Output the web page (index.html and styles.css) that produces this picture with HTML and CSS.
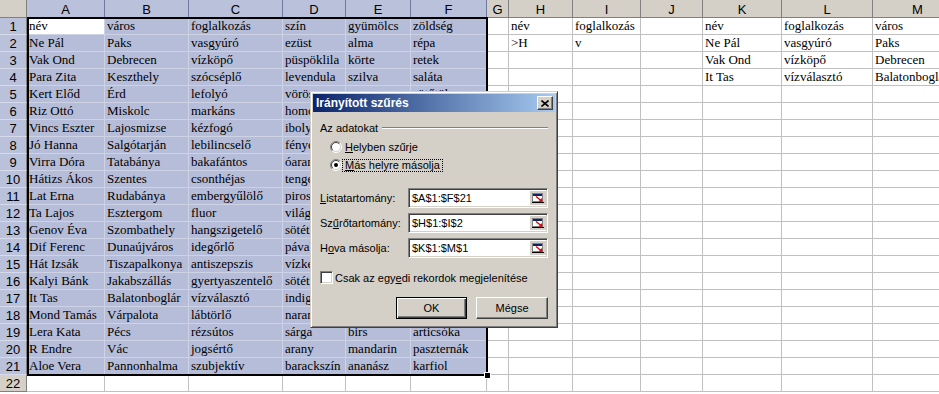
FILE: index.html
```html
<!DOCTYPE html>
<html lang="hu">
<head>
    <meta charset="UTF-8">
    <title>Irányított szűrés</title>
    <link rel="stylesheet" href="styles.css">
</head>
<body>
    <div class="sheet">
        <div class="row head-row">
            <div class="corner"></div>
            <div class="col-head picked">A</div><div class="col-head picked">B</div><div class="col-head picked">C</div>
            <div class="col-head picked">D</div><div class="col-head picked">E</div><div class="col-head picked">F</div>
            <div class="col-head">G</div><div class="col-head">H</div><div class="col-head">I</div>
            <div class="col-head">J</div><div class="col-head">K</div><div class="col-head">L</div><div class="col-head">M</div>
        </div>

        <div class="row in-range"><div class="row-head">1</div>
            <div class="cell active">név</div><div class="cell">város</div><div class="cell">foglalkozás</div><div class="cell">szín</div><div class="cell">gyümölcs</div><div class="cell">zöldség</div>
            <div class="cell"></div><div class="cell">név</div><div class="cell">foglalkozás</div><div class="cell"></div><div class="cell">név</div><div class="cell">foglalkozás</div><div class="cell">város</div></div>
        <div class="row in-range"><div class="row-head">2</div>
            <div class="cell">Ne Pál</div><div class="cell">Paks</div><div class="cell">vasgyúró</div><div class="cell">ezüst</div><div class="cell">alma</div><div class="cell">répa</div>
            <div class="cell"></div><div class="cell">&gt;H</div><div class="cell">v</div><div class="cell"></div><div class="cell">Ne Pál</div><div class="cell">vasgyúró</div><div class="cell">Paks</div></div>
        <div class="row in-range"><div class="row-head">3</div>
            <div class="cell">Vak Ond</div><div class="cell">Debrecen</div><div class="cell">vízköpő</div><div class="cell">püspöklila</div><div class="cell">körte</div><div class="cell">retek</div>
            <div class="cell"></div><div class="cell"></div><div class="cell"></div><div class="cell"></div><div class="cell">Vak Ond</div><div class="cell">vízköpő</div><div class="cell">Debrecen</div></div>
        <div class="row in-range"><div class="row-head">4</div>
            <div class="cell">Para Zita</div><div class="cell">Keszthely</div><div class="cell">szócséplő</div><div class="cell">levendula</div><div class="cell">szilva</div><div class="cell">saláta</div>
            <div class="cell"></div><div class="cell"></div><div class="cell"></div><div class="cell"></div><div class="cell">It Tas</div><div class="cell">vízválasztó</div><div class="cell">Balatonboglár</div></div>
        <div class="row in-range"><div class="row-head">5</div>
            <div class="cell">Kert Előd</div><div class="cell">Érd</div><div class="cell">lefolyó</div><div class="cell">vörös</div><div class="cell">meggy</div><div class="cell">sütőtök</div>
            <div class="cell"></div><div class="cell"></div><div class="cell"></div><div class="cell"></div><div class="cell"></div><div class="cell"></div><div class="cell"></div></div>
        <div class="row in-range"><div class="row-head">6</div>
            <div class="cell">Riz Ottó</div><div class="cell">Miskolc</div><div class="cell">markáns</div><div class="cell">homokszín</div><div class="cell">banán</div><div class="cell">hagyma</div>
            <div class="cell"></div><div class="cell"></div><div class="cell"></div><div class="cell"></div><div class="cell"></div><div class="cell"></div><div class="cell"></div></div>
        <div class="row in-range"><div class="row-head">7</div>
            <div class="cell">Vincs Eszter</div><div class="cell">Lajosmizse</div><div class="cell">kézfogó</div><div class="cell">ibolya</div><div class="cell">cseresznye</div><div class="cell">paprika</div>
            <div class="cell"></div><div class="cell"></div><div class="cell"></div><div class="cell"></div><div class="cell"></div><div class="cell"></div><div class="cell"></div></div>
        <div class="row in-range"><div class="row-head">8</div>
            <div class="cell">Jó Hanna</div><div class="cell">Salgótarján</div><div class="cell">lebilincselő</div><div class="cell">fényes</div><div class="cell">citrom</div><div class="cell">karalábé</div>
            <div class="cell"></div><div class="cell"></div><div class="cell"></div><div class="cell"></div><div class="cell"></div><div class="cell"></div><div class="cell"></div></div>
        <div class="row in-range"><div class="row-head">9</div>
            <div class="cell">Virra Dóra</div><div class="cell">Tatabánya</div><div class="cell">bakafántos</div><div class="cell">óarany</div><div class="cell">dinnye</div><div class="cell">uborka</div>
            <div class="cell"></div><div class="cell"></div><div class="cell"></div><div class="cell"></div><div class="cell"></div><div class="cell"></div><div class="cell"></div></div>
        <div class="row in-range"><div class="row-head">10</div>
            <div class="cell">Hátizs Ákos</div><div class="cell">Szentes</div><div class="cell">csonthéjas</div><div class="cell">tengerkék</div><div class="cell">eper</div><div class="cell">spenót</div>
            <div class="cell"></div><div class="cell"></div><div class="cell"></div><div class="cell"></div><div class="cell"></div><div class="cell"></div><div class="cell"></div></div>
        <div class="row in-range"><div class="row-head">11</div>
            <div class="cell">Lat Erna</div><div class="cell">Rudabánya</div><div class="cell">embergyűlölő</div><div class="cell">piros</div><div class="cell">füge</div><div class="cell">sóska</div>
            <div class="cell"></div><div class="cell"></div><div class="cell"></div><div class="cell"></div><div class="cell"></div><div class="cell"></div><div class="cell"></div></div>
        <div class="row in-range"><div class="row-head">12</div>
            <div class="cell">Ta Lajos</div><div class="cell">Esztergom</div><div class="cell">fluor</div><div class="cell">világoskék</div><div class="cell">kiwi</div><div class="cell">zeller</div>
            <div class="cell"></div><div class="cell"></div><div class="cell"></div><div class="cell"></div><div class="cell"></div><div class="cell"></div><div class="cell"></div></div>
        <div class="row in-range"><div class="row-head">13</div>
            <div class="cell">Genov Éva</div><div class="cell">Szombathely</div><div class="cell">hangszigetelő</div><div class="cell">sötétkék</div><div class="cell">málna</div><div class="cell">brokkoli</div>
            <div class="cell"></div><div class="cell"></div><div class="cell"></div><div class="cell"></div><div class="cell"></div><div class="cell"></div><div class="cell"></div></div>
        <div class="row in-range"><div class="row-head">14</div>
            <div class="cell">Dif Ferenc</div><div class="cell">Dunaújváros</div><div class="cell">idegőrlő</div><div class="cell">pávakék</div><div class="cell">szeder</div><div class="cell">padlizsán</div>
            <div class="cell"></div><div class="cell"></div><div class="cell"></div><div class="cell"></div><div class="cell"></div><div class="cell"></div><div class="cell"></div></div>
        <div class="row in-range"><div class="row-head">15</div>
            <div class="cell">Hát Izsák</div><div class="cell">Tiszapalkonya</div><div class="cell">antiszepszis</div><div class="cell">vízkék</div><div class="cell">ribizli</div><div class="cell">cukkini</div>
            <div class="cell"></div><div class="cell"></div><div class="cell"></div><div class="cell"></div><div class="cell"></div><div class="cell"></div><div class="cell"></div></div>
        <div class="row in-range"><div class="row-head">16</div>
            <div class="cell">Kalyi Bánk</div><div class="cell">Jakabszállás</div><div class="cell">gyertyaszentelő</div><div class="cell">sötétzöld</div><div class="cell">barack</div><div class="cell">tök</div>
            <div class="cell"></div><div class="cell"></div><div class="cell"></div><div class="cell"></div><div class="cell"></div><div class="cell"></div><div class="cell"></div></div>
        <div class="row in-range"><div class="row-head">17</div>
            <div class="cell">It Tas</div><div class="cell">Balatonboglár</div><div class="cell">vízválasztó</div><div class="cell">indigó</div><div class="cell">datolya</div><div class="cell">borsó</div>
            <div class="cell"></div><div class="cell"></div><div class="cell"></div><div class="cell"></div><div class="cell"></div><div class="cell"></div><div class="cell"></div></div>
        <div class="row in-range"><div class="row-head">18</div>
            <div class="cell">Mond Tamás</div><div class="cell">Várpalota</div><div class="cell">lábtörlő</div><div class="cell">narancs</div><div class="cell">egres</div><div class="cell">bab</div>
            <div class="cell"></div><div class="cell"></div><div class="cell"></div><div class="cell"></div><div class="cell"></div><div class="cell"></div><div class="cell"></div></div>
        <div class="row in-range"><div class="row-head">19</div>
            <div class="cell">Lera Kata</div><div class="cell">Pécs</div><div class="cell">rézsútos</div><div class="cell">sárga</div><div class="cell">birs</div><div class="cell">articsóka</div>
            <div class="cell"></div><div class="cell"></div><div class="cell"></div><div class="cell"></div><div class="cell"></div><div class="cell"></div><div class="cell"></div></div>
        <div class="row in-range"><div class="row-head">20</div>
            <div class="cell">R Endre</div><div class="cell">Vác</div><div class="cell">jogsértő</div><div class="cell">arany</div><div class="cell">mandarin</div><div class="cell">paszternák</div>
            <div class="cell"></div><div class="cell"></div><div class="cell"></div><div class="cell"></div><div class="cell"></div><div class="cell"></div><div class="cell"></div></div>
        <div class="row in-range"><div class="row-head">21</div>
            <div class="cell">Aloe Vera</div><div class="cell">Pannonhalma</div><div class="cell">szubjektív</div><div class="cell">barackszín</div><div class="cell">ananász</div><div class="cell">karfiol</div>
            <div class="cell"></div><div class="cell"></div><div class="cell"></div><div class="cell"></div><div class="cell"></div><div class="cell"></div><div class="cell"></div></div>
        <div class="row"><div class="row-head">22</div>
            <div class="cell"></div><div class="cell"></div><div class="cell"></div><div class="cell"></div><div class="cell"></div><div class="cell"></div>
            <div class="cell"></div><div class="cell"></div><div class="cell"></div><div class="cell"></div><div class="cell"></div><div class="cell"></div><div class="cell"></div></div>

        <!-- selected range A1:F21 -->
        <div class="range-frame"><span class="fill-handle"></span></div>

        <!-- Advanced filter dialog -->
        <div class="dialog">
            <div class="title-bar">
                <span>Irányított szűrés</span>
                <span class="close-btn">
                    <svg width="8" height="7" viewBox="0 0 8 7"><path d="M0.5 0.5L7.5 6.5M7.5 0.5L0.5 6.5" stroke="#000" stroke-width="1.6"/></svg>
                </span>
            </div>
            <div class="dialog-body">
                <div class="group-label"><span>Az adatokat</span><span class="etched"></span></div>

                <div class="radio-row first">
                    <svg class="radio" width="12" height="12" viewBox="0 0 12 12">
                        <circle cx="6" cy="6" r="5" fill="#fff"/>
                        <path d="M2.1 9.9A5.5 5.5 0 0 1 9.9 2.1" fill="none" stroke="#808080"/>
                        <path d="M9.9 2.1A5.5 5.5 0 0 1 2.1 9.9" fill="none" stroke="#fff"/>
                        <path d="M2.8 9.2A4.5 4.5 0 0 1 9.2 2.8" fill="none" stroke="#404040"/>
                        <path d="M9.2 2.8A4.5 4.5 0 0 1 2.8 9.2" fill="none" stroke="#d4d0c8"/>
                    </svg>
                    <span class="radio-label"><u>H</u>elyben szűrje</span>
                </div>
                <div class="radio-row">
                    <svg class="radio" width="12" height="12" viewBox="0 0 12 12">
                        <circle cx="6" cy="6" r="5" fill="#fff"/>
                        <path d="M2.1 9.9A5.5 5.5 0 0 1 9.9 2.1" fill="none" stroke="#808080"/>
                        <path d="M9.9 2.1A5.5 5.5 0 0 1 2.1 9.9" fill="none" stroke="#fff"/>
                        <path d="M2.8 9.2A4.5 4.5 0 0 1 9.2 2.8" fill="none" stroke="#404040"/>
                        <path d="M9.2 2.8A4.5 4.5 0 0 1 2.8 9.2" fill="none" stroke="#d4d0c8"/>
                        <circle cx="6" cy="6" r="2" fill="#000"/>
                    </svg>
                    <span class="radio-label focused"><u>M</u>ás helyre másolja</span>
                </div>

                <div class="range-row first">
                    <span><u>L</u>istatartomány:</span>
                    <span class="ref-input">$A$1:$F$21
                        <svg class="ref-btn" width="16" height="14" viewBox="0 0 16 14">
                            <rect x="2.5" y="2.5" width="10" height="8" fill="#fff" stroke="#808080"/>
                            <rect x="3" y="3" width="9" height="2" fill="#0a246a"/>
                            <rect x="2" y="11" width="12" height="1" fill="#000"/>
                            <path d="M6 5.5L11 9.5" stroke="#e00000" stroke-width="1.5"/>
                            <path d="M12.5 11L8.5 10.5L12 7Z" fill="#e00000"/>
                        </svg>
                    </span>
                </div>
                <div class="range-row">
                    <span>Sz<u>ű</u>rőtartomány:</span>
                    <span class="ref-input">$H$1:$I$2
                        <svg class="ref-btn" width="16" height="14" viewBox="0 0 16 14">
                            <rect x="2.5" y="2.5" width="10" height="8" fill="#fff" stroke="#808080"/>
                            <rect x="3" y="3" width="9" height="2" fill="#0a246a"/>
                            <rect x="2" y="11" width="12" height="1" fill="#000"/>
                            <path d="M6 5.5L11 9.5" stroke="#e00000" stroke-width="1.5"/>
                            <path d="M12.5 11L8.5 10.5L12 7Z" fill="#e00000"/>
                        </svg>
                    </span>
                </div>
                <div class="range-row">
                    <span>H<u>o</u>va másolja:</span>
                    <span class="ref-input">$K$1:$M$1
                        <svg class="ref-btn" width="16" height="14" viewBox="0 0 16 14">
                            <rect x="2.5" y="2.5" width="10" height="8" fill="#fff" stroke="#808080"/>
                            <rect x="3" y="3" width="9" height="2" fill="#0a246a"/>
                            <rect x="2" y="11" width="12" height="1" fill="#000"/>
                            <path d="M6 5.5L11 9.5" stroke="#e00000" stroke-width="1.5"/>
                            <path d="M12.5 11L8.5 10.5L12 7Z" fill="#e00000"/>
                        </svg>
                    </span>
                </div>

                <div class="check-row">
                    <span class="checkbox"></span>
                    <span>Csak az egy<u>e</u>di rekordok megjelenítése</span>
                </div>

                <div class="button-row">
                    <span class="btn default">OK</span>
                    <span class="btn">Mégse</span>
                </div>
            </div>
        </div>
    </div>
</body>
</html>
```

FILE: styles.css
```css
* {
    box-sizing: border-box;
}

body {
    margin: 0;
    overflow: hidden;
    background: #fff;
    font-family: "Liberation Serif", "Times New Roman", serif;
}

.sheet {
    position: relative;
    width: 963px;
}

.row {
    display: grid;
    grid-template-columns: 27px 78px 84px 94px 63px 65px 76px 22px 64px 68px 62px 79px 91px 90px;
    height: 17px;
}

.head-row {
    height: 18px;
}

/* headers */
.corner,
.col-head,
.row-head {
    background: #d4d0c8;
    border-right: 1px solid #808080;
    border-bottom: 1px solid #808080;
    font-family: "Liberation Sans", Arial, sans-serif;
    font-size: 13px;
    text-align: center;
    color: #000;
}

.col-head {
    padding-top: 3px;
    line-height: 14px;
}

.col-head.picked {
    background: #bac1da;
    border-right-color: #6f7aa2;
}

.row-head {
    padding-top: 2px;
    line-height: 14px;
}

.in-range .row-head {
    background: #bac1da;
    border-bottom-color: #d6daea;
}

/* cells */
.cell {
    border-right: 1px solid #c0c0c0;
    border-bottom: 1px solid #c0c0c0;
    font-size: 13px;
    line-height: 14px;
    padding: 1px 2px 0;
    white-space: nowrap;
    overflow: hidden;
    color: #000;
}

.in-range .cell:nth-child(-n+7) {
    background: #b6bdd8;
    border-color: #cdd2e4;
}

.in-range .cell.active {
    background: #fff;
}

.range-frame {
    position: absolute;
    left: 27px;
    top: 17px;
    width: 461px;
    height: 359px;
    border: 2px solid #000;
    pointer-events: none;
}

.fill-handle {
    position: absolute;
    right: -5px;
    bottom: -5px;
    width: 7px;
    height: 7px;
    background: #000;
    border: 1px solid #fff;
}

/* dialog */
.dialog {
    position: absolute;
    left: 310px;
    top: 91px;
    width: 248px;
    height: 237px;
    padding: 2px;
    background: #d4d0c8;
    border: 1px solid;
    border-color: #d4d0c8 #404040 #404040 #d4d0c8;
    box-shadow: inset 1px 1px #fff, inset -1px -1px #808080;
    font-family: "Liberation Sans", Arial, sans-serif;
    font-size: 11px;
    color: #000;
}

.title-bar {
    height: 18px;
    display: flex;
    align-items: center;
    justify-content: space-between;
    padding: 0 2px 0 3px;
    background: linear-gradient(to right, #0a246a, #a6caf0);
    color: #fff;
    font-weight: bold;
    font-size: 12px;
}

.close-btn {
    width: 16px;
    height: 14px;
    display: flex;
    align-items: center;
    justify-content: center;
    background: #d4d0c8;
    border: 1px solid;
    border-color: #fff #404040 #404040 #fff;
    box-shadow: inset -1px -1px #808080;
}

.dialog-body {
    padding: 9px 7px 0;
}

.group-label {
    display: flex;
    align-items: center;
    height: 14px;
}

.etched {
    flex: 1;
    height: 2px;
    margin-left: 4px;
    border-top: 1px solid #808080;
    border-bottom: 1px solid #fff;
}

.radio-row {
    display: flex;
    align-items: center;
    height: 18px;
    margin-left: 10px;
}

.radio-row.first {
    margin-top: 3px;
}

.radio-label {
    padding: 0 2px;
    line-height: 11px;
    border: 1px dotted transparent;
}

.radio-label.focused {
    border-color: #000;
}

.range-row {
    display: flex;
    align-items: center;
    justify-content: space-between;
    height: 20px;
    margin-top: 5px;
}

.range-row.first {
    margin-top: 14px;
}

.ref-input {
    width: 140px;
    height: 20px;
    display: flex;
    align-items: center;
    justify-content: space-between;
    padding-left: 3px;
    background: #fff;
    border: 1px solid;
    border-color: #808080 #fff #fff #808080;
    box-shadow: inset 1px 1px #404040, inset -1px -1px #d4d0c8;
}

.ref-btn {
    margin-right: 1px;
    background: #d4d0c8;
}

.check-row {
    display: flex;
    align-items: center;
    gap: 2px;
    height: 13px;
    margin-top: 13px;
}

.checkbox {
    width: 13px;
    height: 13px;
    background: #fff;
    border: 1px solid;
    border-color: #808080 #fff #fff #808080;
    box-shadow: inset 1px 1px #404040, inset -1px -1px #d4d0c8;
}

.button-row {
    display: flex;
    justify-content: flex-end;
    gap: 9px;
    margin-top: 13px;
}

.btn {
    width: 72px;
    height: 22px;
    display: flex;
    align-items: center;
    justify-content: center;
    border: 1px solid;
    border-color: #fff #404040 #404040 #fff;
    box-shadow: inset -1px -1px #808080;
}

.btn.default {
    width: 71px;
    border-color: #000;
    box-shadow: inset 1px 1px #fff, inset -1px -1px #404040, inset -2px -2px #808080;
}
```
